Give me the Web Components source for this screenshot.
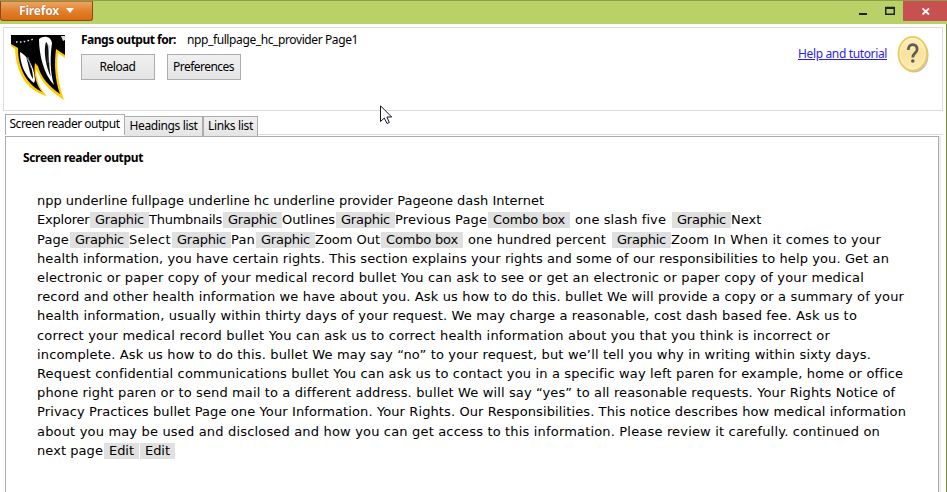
<!DOCTYPE html>
<html lang="en">
<head>
<meta charset="utf-8">
<title>Fangs</title>
<style>
body{margin:0;width:947px;height:492px;overflow:hidden;background:#fff;color:#000;font:12px/16px "Noto Sans","Open Sans",sans-serif}
</style>
</head>
<body>
<fangs-window></fangs-window>
<script>
/* One run of text, tracked so that it fills the width given in "w". */
customElements.define('fit-text', class extends HTMLElement {
  connectedCallback() {
    const root = this.attachShadow({mode: 'open'});
    root.innerHTML = `<style>:host{display:block;flex:none;white-space:pre}span{display:inline-block}:host(.link) span{text-decoration:underline}</style><span><slot></slot></span>`;
    const w = +this.getAttribute('w');
    const span = root.querySelector('span');
    const natural = span.getBoundingClientRect().width;
    span.style.letterSpacing = ((w - natural) / this.textContent.length) + 'px';
    this.style.width = w + 'px';
  }
});

customElements.define('title-bar', class extends HTMLElement {
  connectedCallback() {
    this.attachShadow({mode: 'open'}).innerHTML = `<style>
      :host{display:flex;height:24px;box-sizing:border-box;background:#b9d267;border-top:1px solid #8d9e4b;justify-content:space-between;align-items:flex-start}
      .app{display:flex;align-items:center;gap:7px;box-sizing:border-box;width:93px;height:20px;padding:0 0 1px 18px;color:#fff;font-weight:700;border:1px solid #8a4a1b;border-top-color:#b8763a;border-radius:0 0 3px 3px;background:linear-gradient(#eda461,#e2802f 50%,#d96b12);text-shadow:0 0 1px #8a3c08}
      .controls{display:flex;height:20px}
      svg{display:block}
    </style>
    <div class="app"><fit-text w="40">Firefox</fit-text><svg width="8" height="5"><path d="M0 0H8L4 5Z" fill="#fff"/></svg></div>
    <div class="controls">
      <svg width="94" height="20"><rect x="50" y="0" width="44" height="20" fill="#c75050"/><path d="M6 12h8v2H6z" fill="#222"/><path d="M32.750 6.500h8.500v6.750h-8.500z" fill="none" stroke="#222" stroke-width="1.500"/><path d="M32 6h10v2H32z" fill="#222"/><path d="M69.500 7.300l6.500 6.200M76 7.300l-6.500 6.200" stroke="#fff" stroke-width="1.800"/></svg>
    </div>`;
  }
});

customElements.define('push-button', class extends HTMLElement {
  connectedCallback() {
    this.attachShadow({mode: 'open'}).innerHTML = `<style>
      :host{display:flex;box-sizing:border-box;width:74px;height:26px;border:1px solid #acacac;background:linear-gradient(#f0f0f0,#e5e5e5);align-items:center;justify-content:center;padding-right:1px}
    </style><slot></slot>`;
  }
});

customElements.define('fangs-logo', class extends HTMLElement {
  connectedCallback() {
    this.attachShadow({mode: 'open'}).innerHTML = `<style>:host{display:block;width:54px;height:66px}svg{display:block}</style>
    <svg width="54" height="66" viewBox="0 0 54 66">
      <path d="M0 0H54V23L47 18C45 31 47 48 53 65C42 58 33 50 28 40L25 34C25 45 29 54 36 61C16 56 5 38 4 14L0 11Z" fill="#fc0"/>
      <path d="M0 0H54V20L45 14C43 29 44 45 49 59C38 51 30 43 27 31L24 28C22 40 26 51 31 57C17 50 7 35 7 13L0 9Z" fill="#000"/>
      <path d="M9 17C15 20 23 29 24 45L23 48C14 41 9 29 9 17Z" fill="#fff"/>
      <path d="M15 22C20 29 22 37 22 44C18 38 18 30 15 22Z" fill="#000"/>
      <path d="M28 4C33 0 40 1 41 8C39 22 39 37 43 50C33 40 28 20 28 4Z" fill="#fff"/>
      <path d="M35 7C39 9 37 29 40 42C35 33 32 15 35 7Z" fill="#111"/>
      <path d="M17 22l3 11M38 10l-1 18" stroke="#888" stroke-width=".7"/>
      <path d="M5 7L12 7L23 4" stroke="#ddd" stroke-width="1.400" stroke-dasharray="1.600 2.300" fill="none"/>
      <path d="M50 1h4v4l-2 1z" fill="#ddd"/>
    </svg>`;
  }
});

customElements.define('help-icon', class extends HTMLElement {
  connectedCallback() {
    this.attachShadow({mode: 'open'}).innerHTML = `<style>:host{display:block;width:33px;height:39px}svg{display:block}</style>
    <svg width="33" height="39" viewBox="0 0 33 39">
      <defs><linearGradient id="g" x2="0" y2="1"><stop stop-color="#fdf0c0"/><stop offset=".5" stop-color="#f9e29c"/><stop offset="1" stop-color="#fbecb5"/></linearGradient></defs>
      <ellipse cx="17" cy="20.300" rx="14.500" ry="17.300" fill="#aaa" opacity=".75"/>
      <ellipse cx="15.700" cy="18.700" rx="14.200" ry="16.900" fill="url(#g)" stroke="#efca55" stroke-width="1.800"/>
      <ellipse cx="15.700" cy="18.700" rx="12.400" ry="15.100" fill="none" stroke="#fff5cf" stroke-width=".8"/>
      <path d="M11.300 15C11 7.700 20.500 8 20.100 14.500C19.900 18 15.800 18.300 15.800 22.500" fill="none" stroke="#5d5b55" stroke-width="2.700"/>
      <circle cx="15.800" cy="26" r="1.800" fill="#5d5b55"/>
    </svg>`;
  }
});

customElements.define('page-header', class extends HTMLElement {
  connectedCallback() {
    this.attachShadow({mode: 'open'}).innerHTML = `<style>
      :host{display:flex;box-sizing:border-box;margin:3px 3px 0 3px;height:84px;border:1px solid #dcdcdc;padding:7px 12px 0 7px;align-items:flex-start}
      .main{display:flex;flex-direction:column;margin:-3px 0 0 16px;gap:6px;flex:1}
      .row{display:flex;gap:11px}.buttons{gap:12px}
      .help{display:flex;gap:10px}
      .link{color:#2a1fe8;margin-top:11px}
      b{font-weight:700}
    </style>
    <fangs-logo></fangs-logo>
    <div class="main">
      <div class="row"><b><fit-text w="95">Fangs output for:</fit-text></b><fit-text w="171">npp_fullpage_hc_provider Page1</fit-text></div>
      <div class="row buttons"><push-button><fit-text w="36">Reload</fit-text></push-button><push-button><fit-text w="61">Preferences</fit-text></push-button></div>
    </div>
    <div class="help"><fit-text class="link" w="89">Help and tutorial</fit-text><help-icon></help-icon></div>`;
  }
});

customElements.define('tab-strip', class extends HTMLElement {
  connectedCallback() {
    this.attachShadow({mode: 'open'}).innerHTML = `<style>
      :host{display:flex;height:22px;margin:3px 3px 0 5px;align-items:flex-end}
      div{box-sizing:border-box;border:1px solid #acacac;border-bottom:0;height:20px;padding-top:1px;background:linear-gradient(#f0f0f0,#e5e5e5);display:flex;justify-content:center}
      .on{width:120px;height:21px;margin-bottom:1px;background:#fff;padding-right:1px}
      .h{width:78px;border-left:0}.l{width:55px}
      .rest{flex:1;background:none;border:0;border-bottom:1px solid #dcdcdc;height:3px;margin-bottom:1px;padding:0}
    </style>
    <div class="on"><fit-text w="110">Screen reader output</fit-text></div><div class="h"><fit-text w="68">Headings list</fit-text></div><div class="l"><fit-text w="45">Links list</fit-text></div><div class="rest"></div>`;
  }
});

/* Shaded marker naming the role of an element. */
customElements.define('role-chip', class extends HTMLElement {
  connectedCallback() {
    this.attachShadow({mode: 'open'}).innerHTML = `<style>:host{display:block;flex:none;box-sizing:border-box;height:16px;line-height:16px;background:#e0e0e0;padding-left:5px}</style><slot></slot>`;
  }
});

const left = 37;
/* Each run: [text, left edge, right edge]; "#" opens a role marker. */
const lines = [
  [['npp underline fullpage underline hc underline provider Pageone dash Internet',37,544]],
  [['Explorer',37,89.5],['#Graphic',90,149],['Thumbnails',149,222],['#Graphic',223,282],['Outlines',282,335],['#Graphic',336,395],['Previous Page',395,487],['#Combo box',488,570],['one slash five',575,666],['#Graphic',672,731],['Next',731,761.5]],
  [['Page',37,69],['#Graphic',70,129],['Select',129,171],['#Graphic',172,231],['Pan',231,255],['#Graphic',256,315],['Zoom Out',315,380],['#Combo box',381,463],['one hundred percent',468,606],['#Graphic',612,671],['Zoom In When it comes to your',671,881]],
  [['health information, you have certain rights. This section explains your rights and some of our responsibilities to help you. Get an',37,889]],
  [['electronic or paper copy of your medical record bullet You can ask to see or get an electronic or paper copy of your medical',37,864]],
  [['record and other health information we have about you. Ask us how to do this. bullet We will provide a copy or a summary of your',37,904]],
  [['health information, usually within thirty days of your request. We may charge a reasonable, cost dash based fee. Ask us to',37,857]],
  [['correct your medical record bullet You can ask us to correct health information about you that you think is incorrect or',37,830]],
  [['incomplete. Ask us how to do this. bullet We may say “no” to your request, but we’ll tell you why in writing within sixty days.',37,871]],
  [['Request confidential communications bullet You can ask us to contact you in a specific way left paren for example, home or office',37,903]],
  [['phone right paren or to send mail to a different address. bullet We will say “yes” to all reasonable requests. Your Rights Notice of',37,895]],
  [['Privacy Practices bullet Page one Your Information. Your Rights. Our Responsibilities. This notice describes how medical information',37,906]],
  [['about you may be used and disclosed and how you can get access to this information. Please review it carefully. continued on',37,880]],
  [['next page',37,103],['#Edit',104,139],['#Edit',140,175]]
];

customElements.define('reader-output', class extends HTMLElement {
  connectedCallback() {
    const body = lines.map(line => {
      let x = left;
      return '<div class="line">' + line.map(([t, a, b]) => {
        const m = a - x; x = b;
        return t[0] === '#'
          ? `<role-chip style="margin-left:${m}px;width:${b-a}px"><fit-text w="${b-a-10}">${t.slice(1)}</fit-text></role-chip>`
          : `<fit-text style="margin-left:${m}px" w="${b-a}">${t}</fit-text>`;
      }).join('') + '</div>';
    }).join('');
    this.attachShadow({mode: 'open'}).innerHTML = `<style>
      :host{display:block;box-sizing:border-box;margin:0 7px 0 5px;flex:1;border:1px solid #acacac;border-bottom:0;width:934px;box-shadow:2px 0 #eee;padding:13px 0 0 17px}
      h2{margin:0;font-size:12px;line-height:16px}
      .text{padding:25.700px 0 0 14px;font:13px/16px "DejaVu Sans",Verdana,sans-serif}
      .line{display:flex;height:19.200px;align-items:center}
    </style><h2><fit-text w="120">Screen reader output</fit-text></h2><div class="text">${body}</div>`;
  }
});

customElements.define('mouse-pointer', class extends HTMLElement {
  connectedCallback() {
    this.attachShadow({mode: 'open'}).innerHTML = `<style>:host{position:absolute;left:380px;top:105px}svg{display:block}</style>
    <svg width="13" height="20"><path d="M.5 .8V16.500L4.300 13L7 18.500L9.300 17.500L6.900 12H11.700Z" fill="#fff" stroke="#151525"/></svg>`;
  }
});

customElements.define('fangs-window', class extends HTMLElement {
  connectedCallback() {
    this.attachShadow({mode: 'open'}).innerHTML = `<style>
      :host{display:flex;flex-direction:column;position:relative;width:947px;height:492px;background:#fff}
      .client{display:flex;flex-direction:column;flex:1;border-right:1px solid #788f38}
    </style><title-bar></title-bar><div class="client"><page-header></page-header><tab-strip></tab-strip><reader-output></reader-output></div><mouse-pointer></mouse-pointer>`;
  }
});
</script>
</body>
</html>
